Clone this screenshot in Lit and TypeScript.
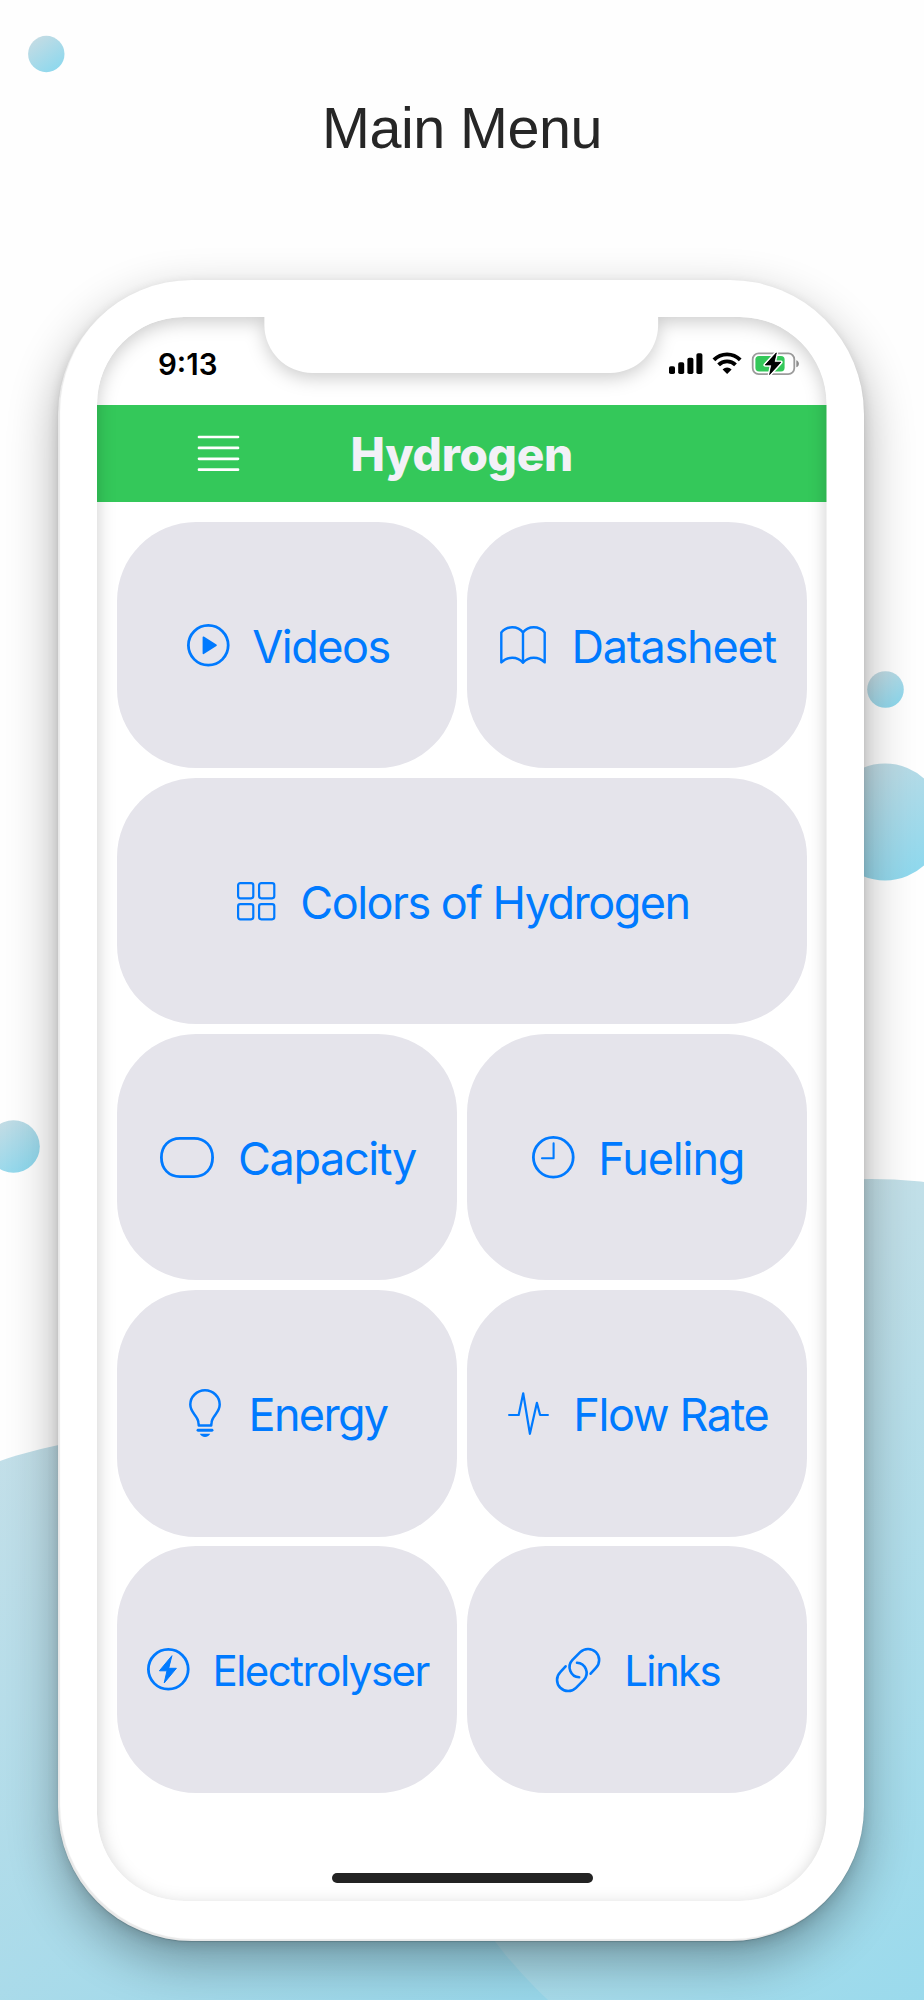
import { LitElement, html, css, svg } from "lit";
import { customElement, property } from "lit/decorators.js";
import { styleMap } from "lit/directives/style-map.js";

interface MenuItem {
  label: string;
  icon: string;
  gap: number;
  tracking: number;
  small?: boolean;
  wide?: boolean;
}

const ITEMS: MenuItem[] = [
  { label: "Videos", icon: "play", gap: 23, tracking: -1.48 },
  { label: "Datasheet", icon: "book", gap: 25.5, tracking: -1.2 },
  { label: "Colors of Hydrogen", icon: "grid", gap: 25.3, tracking: -1.52, wide: true },
  { label: "Capacity", icon: "capsule", gap: 23.6, tracking: -1.38 },
  { label: "Fueling", icon: "clock", gap: 24, tracking: -1.1 },
  { label: "Energy", icon: "bulb", gap: 27.6, tracking: -1.68 },
  { label: "Flow Rate", icon: "pulse", gap: 24.7, tracking: -1.38 },
  { label: "Electrolyser", icon: "bolt", gap: 22.4, tracking: -1.49, small: true },
  { label: "Links", icon: "link", gap: 24.2, tracking: -1.6, small: true },
];

const ICONS: Record<string, { w: number; h: number; art: unknown }> = {
  play: {
    w: 42.6,
    h: 42.6,
    art: svg`<circle cx="21.3" cy="21.3" r="19.9"/><path class="solid" d="M16.4 13.2 L29 21.3 L16.4 29.4Z"/>`,
  },
  book: {
    w: 46,
    h: 38.4,
    art: svg`<path stroke-width="2.4" d="M23 36.8C20.5 33.6 16.5 31.7 12.2 31.7C8 31.7 4.4 33.3 1.3 36.4V6.4C4 3.1 8 1.3 12.2 1.3C16.6 1.3 20.6 3.2 23 6.5C25.4 3.2 29.4 1.3 33.8 1.3C38 1.3 42 3.1 44.7 6.4V36.4C41.6 33.3 38 31.7 33.8 31.7C29.5 31.7 25.5 33.6 23 36.8V6.5"/>`,
  },
  grid: {
    w: 38.4,
    h: 38.4,
    art: svg`<g stroke-width="2.2"><rect x="1.1" y="1.1" width="15.2" height="15.2" rx="2.2"/><rect x="22.1" y="1.1" width="15.2" height="15.2" rx="2.2"/><rect x="1.1" y="22.1" width="15.2" height="15.2" rx="2.2"/><rect x="22.1" y="22.1" width="15.2" height="15.2" rx="2.2"/></g>`,
  },
  capsule: {
    w: 54,
    h: 41,
    art: svg`<path d="M20 1.4H34C45 1.4 52.6 9 52.6 20.5S45 39.6 34 39.6H20C9 39.6 1.4 32 1.4 20.5S9 1.4 20 1.4Z"/>`,
  },
  clock: {
    w: 42.6,
    h: 42.6,
    art: svg`<circle cx="21.3" cy="21.3" r="19.9"/><path stroke-width="2.1" d="M21.6 7.4V22.2H10"/>`,
  },
  bulb: {
    w: 32,
    h: 48,
    art: svg`<path stroke-width="2.5" d="M9.8 36.6L9.4 33.4C8.8 26.6 1.3 24 1.3 15.6A14.7 14.3 0 0 1 30.7 15.6C30.7 24 23.2 26.6 22.6 33.4L22.2 36.6Z"/><path stroke-width="2.9" d="M9 41.3H23"/><path class="dome" d="M10.8 44.8H21.2C20.4 46.8 18.4 47.9 16 47.9S11.6 46.8 10.8 44.8Z"/>`,
  },
  pulse: {
    w: 41,
    h: 43,
    art: svg`<path stroke-width="2.2" d="M1.1 23H10.7L15.2 1.3L21.9 41.8L28.9 10.8L32.1 23H39.9"/>`,
  },
  bolt: {
    w: 42.6,
    h: 42.6,
    art: svg`<circle cx="21.3" cy="21.3" r="19.9"/><path class="solid thin" d="M24.7 8L12.4 22.8H20L17.2 35L29.4 20.3H22Z"/>`,
  },
  link: {
    w: 44.2,
    h: 44,
    art: svg`<path stroke-width="2.6" d="M34.6 25.7L39.9 19.9A11.1 11.1 0 0 0 24.2 4.2L16.3 12.2A10.2 10.2 0 0 0 23.2 29.3M9.6 18.3L4.3 24.1A11.1 11.1 0 0 0 20 39.8L27.9 31.8A10.2 10.2 0 0 0 21 14.7"/>`,
  },
};

@customElement("menu-tile")
class MenuTile extends LitElement {
  @property({ attribute: false }) item!: MenuItem;

  static styles = css`
    :host {
      display: flex;
      align-items: center;
      justify-content: center;
      padding-left: 2px;
      border-radius: 79px;
      background: #e5e4eb;
      color: #007aff;
    }
    .icon {
      flex: none;
      overflow: visible;
      fill: none;
      stroke: currentColor;
      stroke-width: 2.8;
      stroke-linecap: round;
      stroke-linejoin: round;
    }
    .solid {
      fill: currentColor;
      stroke-width: 1.6;
    }
    .thin {
      stroke-width: 1;
    }
    .dome {
      fill: currentColor;
      stroke: none;
    }
    .label {
      font: 400 45px/56px Inter, sans-serif;
      white-space: nowrap;
      padding-top: 4px;
    }
    .small {
      font-size: 42px;
      padding-top: 2px;
    }
  `;

  render() {
    const { label, icon, gap, tracking, small } = this.item;
    const { w, h, art } = ICONS[icon];
    return html`
      <svg class="icon" width=${w} height=${h} viewBox="0 0 ${w} ${h}">${art}</svg>
      <span
        class=${small ? "label small" : "label"}
        style=${styleMap({ marginLeft: `${gap}px`, letterSpacing: `${tracking}px` })}
        >${label}</span
      >
    `;
  }
}

@customElement("status-bar")
class StatusBar extends LitElement {
  static styles = css`
    :host {
      display: flex;
      justify-content: space-between;
      align-items: center;
      height: 88px;
      padding: 6px 27px 0 61px;
      box-sizing: border-box;
    }
    .time {
      font: 600 29.5px/36px Inter, sans-serif;
      color: #000;
    }
    .icons {
      display: block;
    }
  `;

  render() {
    return html`
      <span class="time">9:13</span>
      <svg class="icons" width="131" height="24" viewBox="0 0 131 24">
        <rect x="0" y="14.3" width="6" height="7.7" rx="1.8" />
        <rect x="9.2" y="10.2" width="6" height="11.8" rx="1.8" />
        <rect x="18.4" y="5.8" width="6" height="16.2" rx="1.8" />
        <rect x="27.4" y="1.2" width="6" height="20.8" rx="1.8" />
        <g fill="none" stroke="#000" stroke-width="3.9">
          <path d="M44.9 7.8A18.6 18.6 0 0 1 71.2 7.8" />
          <path d="M49.6 12.9A12 12 0 0 1 66.5 12.9" />
        </g>
        <path d="M58.1 22L53.6 17.4A6.5 6.5 0 0 1 62.6 17.4Z" />
        <rect x="83.7" y="1.3" width="41.6" height="20.8" rx="6" fill="none" stroke="#9c9c9c" stroke-width="1.8" />
        <path d="M127.3 8.2C130.8 9.2 130.8 14.2 127.3 15.2Z" fill="#8f8f8f" />
        <rect x="86.4" y="4" width="29.2" height="15.4" rx="3.6" fill="#34c85a" />
        <path
          d="M107.4 .8L96.2 13H102.6L100.6 22.6L111.8 10.2H105.2Z"
          stroke="#fff"
          stroke-width="3.6"
          stroke-linejoin="round"
          paint-order="stroke"
        />
        <path d="M107.4 .8L96.2 13H102.6L100.6 22.6L111.8 10.2H105.2Z" stroke="#000" stroke-width=".7" stroke-linejoin="round" />
      </svg>
    `;
  }
}

@customElement("app-root")
class AppRoot extends LitElement {
  static styles = css`
    :host {
      display: flex;
      flex-direction: column;
      position: relative;
      width: 924px;
      height: 2000px;
      overflow: hidden;
      background: #fefefe;
    }
    .backdrop {
      position: absolute;
      inset: 0;
    }
    .title {
      position: relative;
      margin: 0;
      padding: 95px 0 119px;
      font: 400 57.5px/66px "Liberation Sans", Arial, sans-serif;
      letter-spacing: -0.5px;
      text-align: center;
      color: #262626;
    }
    .phone {
      position: relative;
      box-sizing: border-box;
      width: 806px;
      height: 1661px;
      margin-left: 57.5px;
      padding: 37px 37px 40px 39.5px;
      border-radius: 134px;
      background: #fff;
      box-shadow:
        0 1px 1px rgba(0, 0, 0, 0.14),
        inset 2px -2px 1px rgba(0, 0, 0, 0.09),
        0 4px 12px rgba(0, 0, 0, 0.12),
        0 20px 50px rgba(0, 0, 0, 0.32);
    }
    .screen {
      position: relative;
      display: flex;
      flex-direction: column;
      height: 100%;
      overflow: hidden;
      border-radius: 87px;
      background: #fff;
    }
    .bar {
      display: grid;
      grid-template-columns: 1fr auto 1fr;
      align-items: center;
      flex: none;
      height: 97px;
      background: #34c85a;
      color: #f2f1f7;
    }
    .burger {
      display: block;
      margin-left: 100px;
    }
    .heading {
      margin: 0;
      font: 800 46px/56px Inter, sans-serif;
      letter-spacing: -0.3px;
    }
    .grid {
      display: grid;
      grid-template-columns: 1fr 1fr;
      grid-auto-rows: 246.3px;
      gap: 9.8px;
      padding: 20px 19.5px 0 20.2px;
    }
    .wide {
      grid-column: span 2;
    }
    .home {
      flex: none;
      width: 261px;
      height: 10px;
      margin: auto auto 18px 235px;
      border-radius: 5px;
      background: #232323;
    }
    .frame {
      position: absolute;
      inset: 0;
      width: 100%;
      height: 100%;
      pointer-events: none;
      overflow: visible;
      filter: drop-shadow(0 5px 9px rgba(0, 0, 0, 0.2));
    }
  `;

  render() {
    return html`
      <svg class="backdrop" width="924" height="2000" viewBox="0 0 924 2000">
        <defs>
          <linearGradient id="dot" x1="0.1" y1="0" x2="0.8" y2="1">
            <stop offset="0" stop-color="#c9dce3" />
            <stop offset="1" stop-color="#8bd8ee" />
          </linearGradient>
          <linearGradient id="left" x1="0.15" y1="0" x2="0.85" y2="1">
            <stop offset="0" stop-color="#c9e0e8" />
            <stop offset="1" stop-color="#86d5ec" />
          </linearGradient>
          <linearGradient id="right" x1="0.2" y1="0.1" x2="0.85" y2="1">
            <stop offset="0" stop-color="#c8e0e7" />
            <stop offset="1" stop-color="#8bd8ee" />
          </linearGradient>
        </defs>
        <circle cx="46.3" cy="54" r="18.2" fill="url(#dot)" />
        <circle cx="885.5" cy="689.5" r="18.3" fill="url(#dot)" />
        <circle cx="885" cy="822" r="58.4" fill="url(#dot)" />
        <circle cx="13.5" cy="1146.5" r="26.3" fill="url(#dot)" />
        <circle cx="162" cy="1935" r="501" fill="url(#left)" />
        <circle cx="871" cy="1653" r="474" fill="url(#right)" />
      </svg>
      <h1 class="title">Main Menu</h1>
      <div class="phone">
        <div class="screen">
          <status-bar></status-bar>
          <header class="bar">
            <svg class="burger" width="43" height="37" viewBox="0 0 43 37">
              <path
                d="M2 2H41M2 12.9H41M2 23.8H41M2 34.7H41"
                stroke="#fff"
                stroke-width="2.7"
                stroke-linecap="round"
              />
            </svg>
            <h2 class="heading">Hydrogen</h2>
          </header>
          <main class="grid">
            ${ITEMS.map((item) => html`<menu-tile class=${item.wide ? "wide" : ""} .item=${item}></menu-tile>`)}
          </main>
          <div class="home"></div>
          <svg class="frame" viewBox="0 0 730 1585" preserveAspectRatio="none">
            <path
              fill="#fff"
              fill-rule="evenodd"
              d="M-60 -60H790V1645H-60Z M87 0H167.5V8A48 48 0 0 0 215.5 56H513.5A48 48 0 0 0 561.5 8V0H643A87 87 0 0 1 730 87V1498A87 87 0 0 1 643 1585H87A87 87 0 0 1 0 1498V87A87 87 0 0 1 87 0Z"
            />
          </svg>
        </div>
      </div>
    `;
  }
}
